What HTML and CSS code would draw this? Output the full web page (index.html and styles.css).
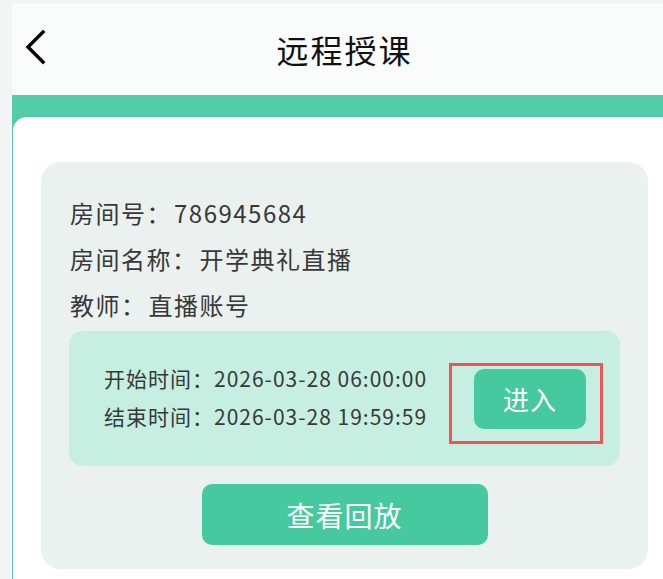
FILE: index.html
```html
<!DOCTYPE html>
<html lang="zh-CN">
<head>
    <meta charset="UTF-8">
    <meta name="viewport" content="width=device-width, initial-scale=1.0">
    <title>远程授课</title>
    <link rel="stylesheet" href="styles.css">
</head>
<body>
    <div class="app">
        <div class="header">
            <a class="back" href="#">
                <svg width="24" height="36" viewBox="0 0 24 36">
                    <polyline points="19,2 4,17 19,32" fill="none" stroke="#000" stroke-width="3.4" stroke-linecap="square"/>
                </svg>
            </a>
            <h1 class="title">远程授课</h1>
            <span class="spacer"></span>
        </div>
        <div class="band">
            <div class="card">
                <div class="room">
                    <p class="info">房间号：<span class="val">786945684</span></p>
                    <p class="info">房间名称：<span class="val">开学典礼直播</span></p>
                    <p class="info">教师：<span class="val">直播账号</span></p>
                    <div class="times">
                        <div class="time-list">
                            <p class="time">开始时间：2026-03-28 06:00:00</p>
                            <p class="time">结束时间：2026-03-28 19:59:59</p>
                        </div>
                        <button class="btn-enter">进入</button>
                        <span class="mark"></span>
                    </div>
                    <div class="actions">
                        <button class="btn-replay">查看回放</button>
                    </div>
                </div>
            </div>
        </div>
    </div>
</body>
</html>
```

FILE: styles.css
```css
body {
    margin: 0;
    background: #f3f4f4;
    font-family: "Noto Sans CJK SC", "Noto Sans", sans-serif;
    overflow: hidden;
}
.app {
    margin-left: 12px;
    height: 579px;
    display: flex;
    flex-direction: column;
    overflow: hidden;
}
.header {
    margin-top: 3px;
    height: 92px;
    flex-shrink: 0;
    background: #fafbfb;
    display: flex;
    align-items: center;
}
.back {
    width: 40px;
    padding-left: 12px;
    display: flex;
    align-items: center;
    margin-top: -2px;
}
.spacer {
    width: 52px;
}
.title {
    flex: 1;
    margin: 0;
    padding-left: 14px;
    text-align: center;
    font-size: 32px;
    font-weight: 400;
    letter-spacing: 2px;
    color: #111;
}
.band {
    flex: 1;
    display: flex;
    flex-direction: column;
    background: #52cca6;
    padding-top: 22px;
}
.card {
    flex: 1;
    margin-left: 1px;
    background: #fff;
    border-top-left-radius: 14px;
    padding: 45px 15px 0 28px;
}
.room {
    background: #ebf1ef;
    border-radius: 20px;
    padding: 28px 28px 24px 28px;
}
.info {
    margin: 0;
    padding-left: 1px;
    font-size: 24px;
    line-height: 46px;
    letter-spacing: 1.5px;
    color: #383838;
}
.val {
    margin-left: 2px;
}
.times {
    position: relative;
    margin-top: 3px;
    height: 135px;
    background: #c6efe1;
    border-radius: 14px;
    display: flex;
    align-items: center;
    justify-content: space-between;
    padding: 0 34px 0 35px;
    box-sizing: border-box;
}
.time-list {
    margin-top: -4px;
}
.time {
    margin: 0;
    font-size: 21px;
    line-height: 38px;
    letter-spacing: 1px;
    color: #353a38;
}
.btn-enter {
    width: 112px;
    height: 60px;
    border: none;
    border-radius: 10px;
    background: #46c99e;
    color: #fff;
    font-family: inherit;
    font-size: 26px;
    letter-spacing: 1px;
}
.mark {
    position: absolute;
    left: 380px;
    top: 32px;
    width: 154px;
    height: 81px;
    border: 3px solid #f05454;
    box-sizing: border-box;
}
.actions {
    margin-top: 18px;
    display: flex;
    justify-content: center;
}
.btn-replay {
    width: 286px;
    height: 61px;
    border: none;
    border-radius: 10px;
    background: #46c99e;
    color: #fff;
    font-family: inherit;
    font-size: 28px;
    letter-spacing: 1px;
}
```
